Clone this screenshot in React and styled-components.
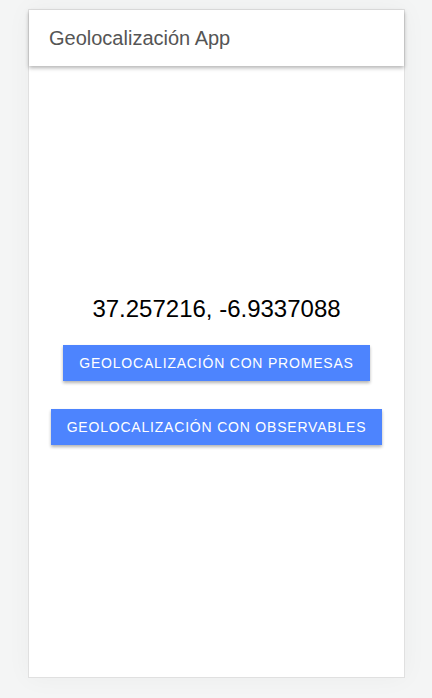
import styled, { createGlobalStyle } from 'styled-components';

const GlobalStyle = createGlobalStyle`
  html, body {
    margin: 0;
    padding: 0;
    background: #f4f5f5;
    font-family: "Liberation Sans", Arial, sans-serif;
  }
`;

export default function App() {
  return (
    <>
      <GlobalStyle />
      <Page>
        <Frame>
          <Toolbar>
            <Title>Geolocalización App</Title>
          </Toolbar>
          <Content>
            <Coords>37.257216, -6.9337088</Coords>
            <ActionButton>Geolocalización con promesas</ActionButton>
            <ActionButton>Geolocalización con observables</ActionButton>
          </Content>
        </Frame>
      </Page>
    </>
  );
}

const Page = styled.div`
  padding: 9px 27px 20px 28px;
  height: 698px;
  box-sizing: border-box;
`;
const Frame = styled.div`
  width: 377px;
  height: 669px;
  box-sizing: border-box;
  border: 1px solid #e0e0e0;
  background: #fff;
  display: flex;
  flex-direction: column;
  box-shadow: 0 0 24px rgba(0, 0, 0, 0.04);
`;
const Toolbar = styled.div`
  height: 56px;
  display: flex;
  align-items: center;
  padding: 0 20px;
  background: #fff;
  box-shadow: 0 2px 4px rgba(0, 0, 0, 0.3);
  position: relative;
  z-index: 1;
`;
const Title = styled.h1`
  margin: 0;
  font-size: 20px;
  font-weight: 400;
  color: #555;
`;
const Content = styled.div`
  flex: 1;
  display: flex;
  flex-direction: column;
  align-items: center;
  justify-content: center;
  padding-bottom: 4px;
`;
const Coords = styled.div`
  font-size: 24px;
  color: #000;
  line-height: 28px;
  margin-bottom: 22px;
`;
const ActionButton = styled.button`
  font-family: "Liberation Sans", Arial, sans-serif;
  background: #4d84fe;
  color: #fff;
  border: none;
  text-transform: uppercase;
  font-size: 14px;
  letter-spacing: 0.8px;
  height: 36px;
  padding: 0 16px;
  box-shadow: 0 2px 3px rgba(0, 0, 0, 0.3);
  & + & {
    margin-top: 28px;
  }
`;
